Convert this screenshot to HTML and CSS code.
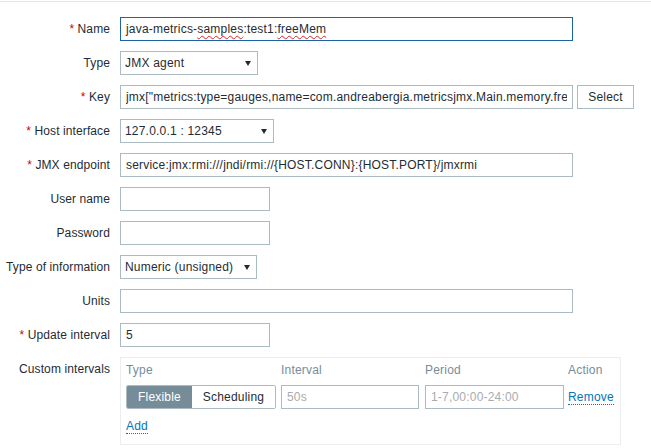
FILE: index.html
```html
<!DOCTYPE html>
<html>
<head>
<meta charset="utf-8">
<link rel="stylesheet" href="styles.css">
</head>
<body>
<div class="topline"></div>
<form class="form">
  <label class="lbl"><span class="req">*</span> Name</label>
  <div class="cell"><div class="input wide focused"><span>java-metrics-</span><span class="spell">samples</span><span>:test1:</span><span class="spell">freeMem</span></div></div>

  <label class="lbl">Type</label>
  <div class="cell"><div class="select w138"><select><option>JMX agent</option></select></div></div>

  <label class="lbl"><span class="req">*</span> Key</label>
  <div class="cell row"><input class="input wide" value='jmx["metrics:type=gauges,name=com.andreabergia.metricsjmx.Main.memory.freeMemory",Value]'><button type="button" class="btn">Select</button></div>

  <label class="lbl"><span class="req">*</span> Host interface</label>
  <div class="cell"><div class="select w154"><select><option>127.0.0.1 : 12345</option></select></div></div>

  <label class="lbl"><span class="req">*</span> JMX endpoint</label>
  <div class="cell"><input class="input wide" value="service:jmx:rmi:///jndi/rmi://{HOST.CONN}:{HOST.PORT}/jmxrmi"></div>

  <label class="lbl">User name</label>
  <div class="cell"><input class="input small" value=""></div>

  <label class="lbl">Password</label>
  <div class="cell"><input class="input small" type="password" value=""></div>

  <label class="lbl">Type of information</label>
  <div class="cell"><div class="select w137"><select><option>Numeric (unsigned)</option></select></div></div>

  <label class="lbl">Units</label>
  <div class="cell"><input class="input wide" value=""></div>

  <label class="lbl"><span class="req">*</span> Update interval</label>
  <div class="cell"><input class="input small" value="5"></div>

  <label class="lbl">Custom intervals</label>
  <div class="cell">
    <div class="intervals">
      <div class="ihead">Type</div>
      <div class="ihead">Interval</div>
      <div class="ihead">Period</div>
      <div class="ihead">Action</div>

      <div class="seg">
        <span class="seg-btn active">Flexible</span>
        <span class="seg-btn">Scheduling</span>
      </div>
      <input class="input" placeholder="50s">
      <input class="input" placeholder="1-7,00:00-24:00">
      <div class="action"><a class="link">Remove</a></div>

      <div class="addrow"><a class="link">Add</a></div>
    </div>
  </div>
</form>
</body>
</html>
```

FILE: styles.css
```css
* { box-sizing: border-box; }
body {
  margin: 0;
  font-family: "Liberation Sans", Arial, sans-serif;
  font-size: 12px;
  letter-spacing: 0.2px;
  color: #1f2c33;
  background: #fff;
}
.topline {
  margin-top: 1px;
  height: 1px;
  background: #e6e6e6;
}
.form {
  display: grid;
  grid-template-columns: 110px 1fr;
  column-gap: 10px;
  row-gap: 10px;
  padding-top: 15px;
}
.lbl {
  text-align: right;
  line-height: 24px;
  white-space: nowrap;
  letter-spacing: 0.1px;
}
.req { color: #d40000; }
.cell { min-height: 24px; }
.row { display: flex; gap: 3px; }
.input {
  display: block;
  height: 24px;
  border: 1px solid #acbbc2;
  padding: 0 5px;
  font: inherit;
  letter-spacing: 0.2px;
  color: #1f2c33;
  background: #fff;
  line-height: 22px;
  outline: none;
  white-space: nowrap;
  overflow: hidden;
  margin: 0;
}
.input::placeholder { color: #a9acae; opacity: 1; }
.wide { width: 453px; }
.small { width: 150px; }
.focused { border-color: #1b65a2; }
.spell {
  text-decoration: underline wavy #e02020;
  text-decoration-thickness: 1px;
  text-underline-offset: 2px;
}
.btn {
  height: 24px;
  width: 57px;
  border: 1px solid #acbbc2;
  background: #fff;
  font: inherit;
  letter-spacing: 0.2px;
  color: #1f2c33;
  padding: 0;
  margin: 0 0 0 1px;
}
.select {
  position: relative;
  height: 24px;
}
.select select {
  appearance: none;
  -webkit-appearance: none;
  width: 100%;
  height: 24px;
  border: 1px solid #acbbc2;
  border-radius: 0;
  background: #fff;
  font: inherit;
  letter-spacing: 0.2px;
  color: #1f2c33;
  padding: 0 4px;
  margin: 0;
  outline: none;
}
.select::after {
  content: "";
  position: absolute;
  right: 7px;
  top: 10px;
  border-left: 3px solid transparent;
  border-right: 3px solid transparent;
  border-top: 5px solid #1f2c33;
  pointer-events: none;
}
.w138 { width: 138px; }
.w154 { width: 154px; }
.w137 { width: 137px; }

.intervals {
  width: 501px;
  border: 1px solid #ebeef0;
  padding: 5px 5px 11px 5px;
  display: grid;
  grid-template-columns: 150px 138px 139px auto;
  column-gap: 5px;
  row-gap: 0;
  align-items: center;
}
.intervals > :nth-child(3), .intervals > :nth-child(7) { margin-left: 1px; }
.ihead {
  color: #768d99;
  line-height: 14px;
  margin-bottom: 8px;
}
.seg {
  display: flex;
  height: 24px;
  border: 1px solid #acbbc2;
  border-radius: 2px;
  overflow: hidden;
}
.seg-btn {
  line-height: 22px;
  text-align: center;
  color: #1f2c33;
  background: #fff;
}
.seg-btn:first-child { width: 65px; }
.seg-btn:last-child { flex: 1; }
.seg-btn.active {
  background: #768d99;
  color: #fff;
}
.intervals .input { width: 100%; }
.action { line-height: 24px; }
.addrow {
  grid-column: 1 / -1;
  margin-top: 10px;
  line-height: 14px;
}
.link {
  color: #0275b8;
  border-bottom: 1px dotted #0275b8;
  cursor: pointer;
}
```
